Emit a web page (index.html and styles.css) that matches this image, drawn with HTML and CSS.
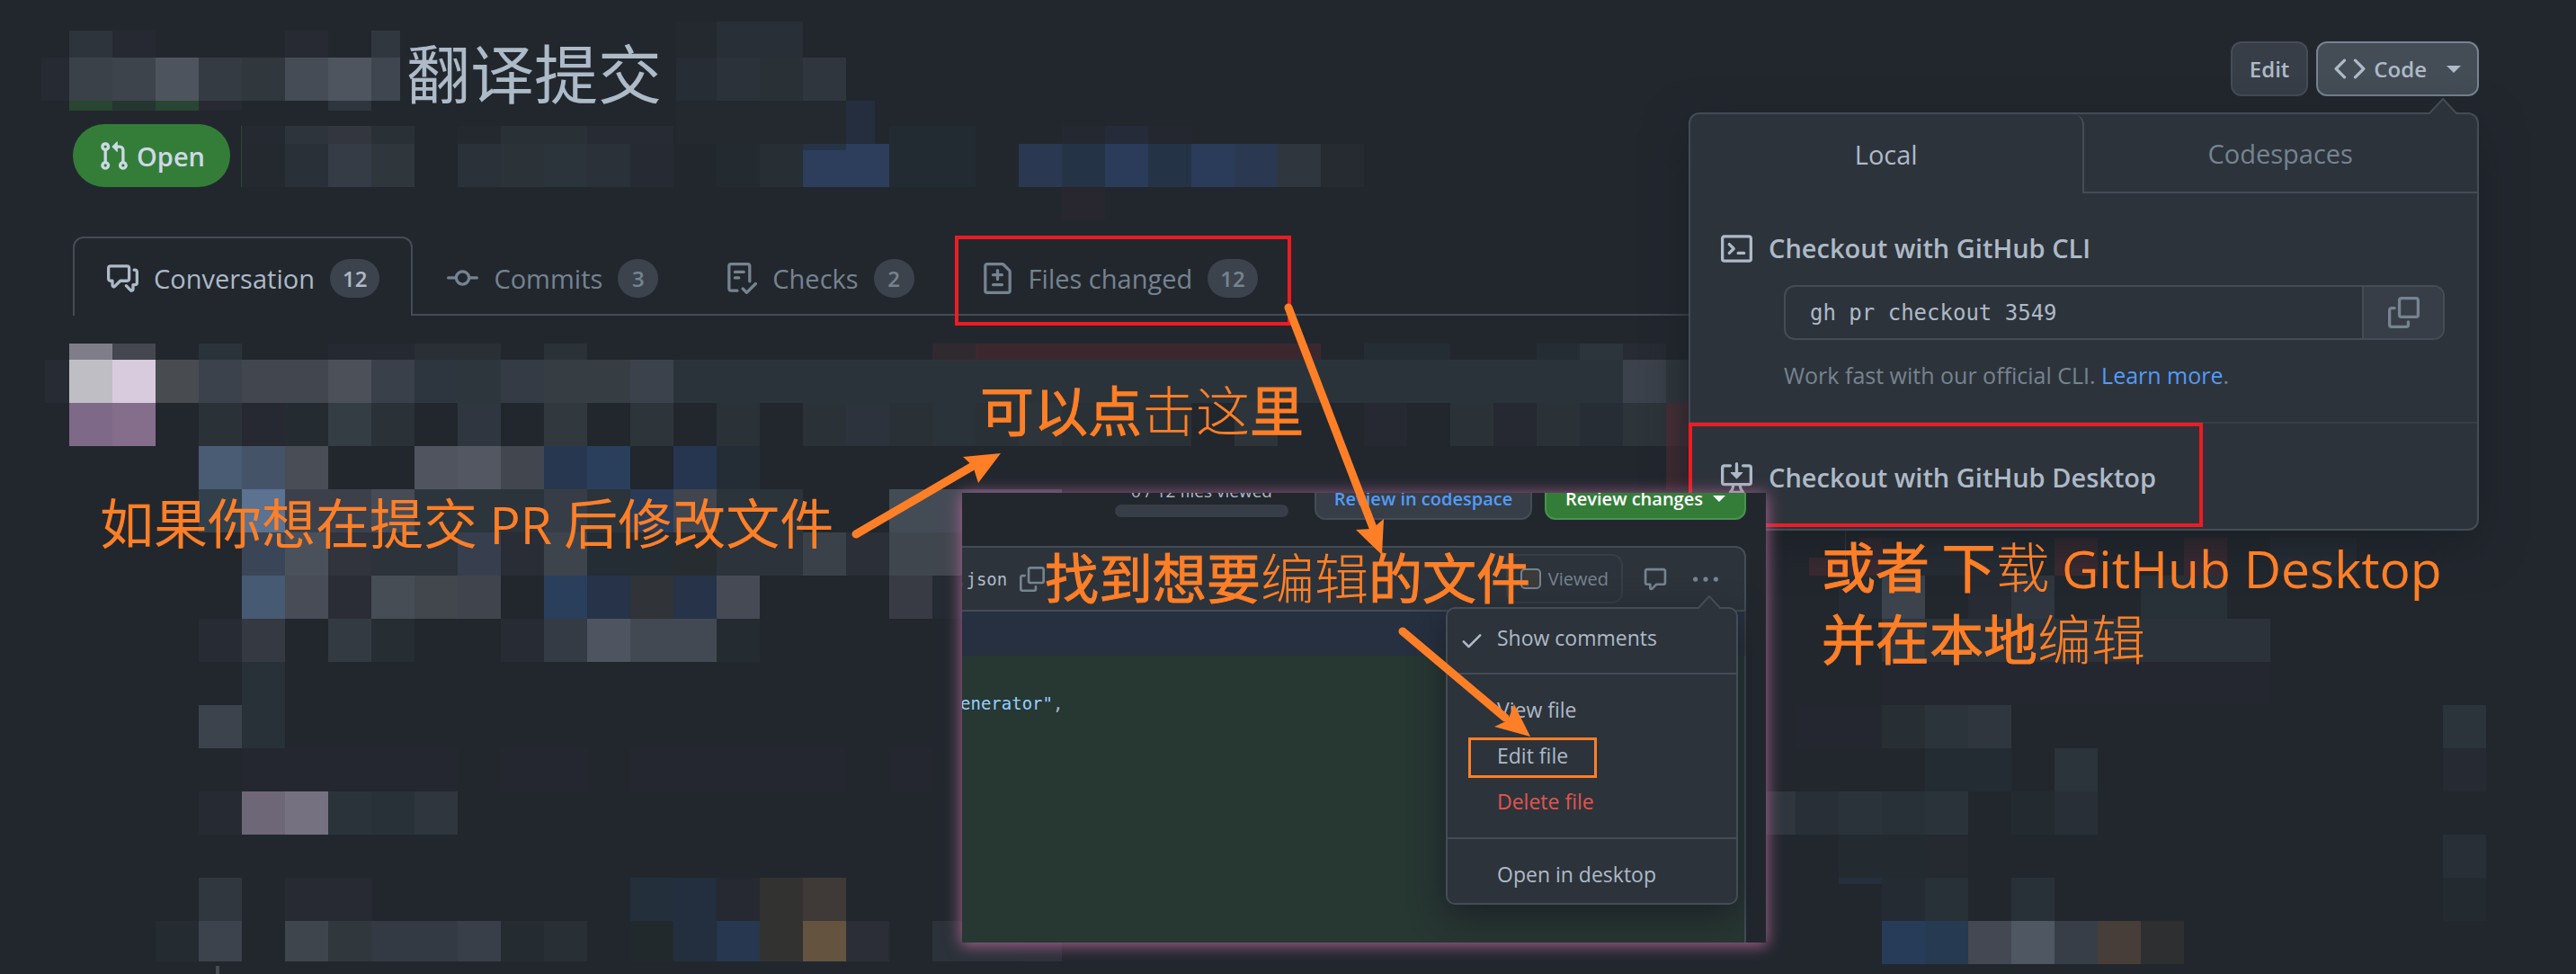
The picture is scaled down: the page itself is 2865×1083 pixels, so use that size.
FILE: index.html
```html
<!DOCTYPE html>
<html lang="zh-CN">
<head>
<meta charset="utf-8">
<meta name="viewport" content="width=device-width, initial-scale=1">
<title>翻译提交</title>
<link rel="stylesheet" href="styles.css">
</head>
<body>
<svg class="sprite" aria-hidden="true">
  <symbol id="i-pr" viewBox="0 0 16 16"><path d="M7.177 3.073L9.573.677A.25.25 0 0110 .854v4.792a.25.25 0 01-.427.177L7.177 3.427a.25.25 0 010-.354zM3.75 2.5a.75.75 0 100 1.5.75.75 0 000-1.5zm-2.25.75a2.25 2.25 0 113 2.122v5.256a2.251 2.251 0 11-1.5 0V5.372A2.25 2.25 0 011.5 3.25zM11 2.5h-1V4h1a1 1 0 011 1v5.628a2.251 2.251 0 101.5 0V5A2.5 2.5 0 0011 2.5zm1 10.25a.75.75 0 111.5 0 .75.75 0 01-1.5 0zM3.75 12a.75.75 0 100 1.5.75.75 0 000-1.5z"/></symbol>
  <symbol id="i-discussion" viewBox="0 0 16 16"><path d="M1.5 2.75a.25.25 0 01.25-.25h8.5a.25.25 0 01.25.25v5.5a.25.25 0 01-.25.25h-3.5a.75.75 0 00-.53.22L3.5 11.44V9.25a.75.75 0 00-.75-.75h-1a.25.25 0 01-.25-.25v-5.5zM1.75 1A1.75 1.75 0 000 2.75v5.5C0 9.216.784 10 1.75 10H2v1.543a1.457 1.457 0 002.487 1.03L7.061 10h3.189A1.75 1.75 0 0012 8.25v-5.5A1.75 1.75 0 0010.25 1h-8.5zM14.5 4.75a.25.25 0 00-.25-.25h-.5a.75.75 0 110-1.5h.5c.966 0 1.75.784 1.75 1.75v5.5A1.75 1.75 0 0114.25 12H14v1.543a1.457 1.457 0 01-2.487 1.03L9.22 12.28a.75.75 0 111.06-1.06l2.22 2.22v-2.19a.75.75 0 01.75-.75h1a.25.25 0 00.25-.25v-5.5z"/></symbol>
  <symbol id="i-commit" viewBox="0 0 16 16"><path fill-rule="evenodd" d="M11.93 8.5a4.002 4.002 0 01-7.86 0H.75a.75.75 0 010-1.5h3.32a4.002 4.002 0 017.86 0h3.32a.75.75 0 010 1.5h-3.32zm-1.43-.75a2.5 2.5 0 10-5 0 2.5 2.5 0 005 0z"/></symbol>
  <symbol id="i-checklist" viewBox="0 0 16 16"><path d="M2.5 1.75a.25.25 0 01.25-.25h8.5a.25.25 0 01.25.25v7.736a.75.75 0 101.5 0V1.75A1.75 1.75 0 0011.25 0h-8.5A1.75 1.75 0 001 1.75v11.5c0 .966.784 1.75 1.75 1.75h3.17a.75.75 0 000-1.5H2.75a.25.25 0 01-.25-.25V1.75zM4.75 4a.75.75 0 000 1.5h4.5a.75.75 0 000-1.5h-4.5zM4 7.75A.75.75 0 014.75 7h2a.75.75 0 010 1.5h-2A.75.75 0 014 7.75zm11.774 3.537a.75.75 0 00-1.048-1.074L10.7 14.145 9.281 12.72a.75.75 0 00-1.062 1.058l1.943 1.95a.75.75 0 001.055.008l4.557-4.45z"/></symbol>
  <symbol id="i-diff" viewBox="0 0 16 16"><path d="M2.75 1.5a.25.25 0 00-.25.25v12.5c0 .138.112.25.25.25h10.5a.25.25 0 00.25-.25V4.664a.25.25 0 00-.073-.177l-2.914-2.914a.25.25 0 00-.177-.073H2.75zM1 1.75C1 .784 1.784 0 2.75 0h7.586c.464 0 .909.184 1.237.513l2.914 2.914c.329.328.513.773.513 1.237v9.586A1.75 1.75 0 0113.25 16H2.75A1.75 1.75 0 011 14.25V1.75zm7 1.5a.75.75 0 01.75.75v1.5h1.5a.75.75 0 010 1.5h-1.5v1.5a.75.75 0 01-1.5 0V7h-1.5a.75.75 0 010-1.5h1.5V4A.75.75 0 018 3.25zm-3 8a.75.75 0 01.75-.75h4.5a.75.75 0 010 1.5h-4.5a.75.75 0 01-.75-.75z"/></symbol>
  <symbol id="i-code" viewBox="0 0 16 16"><path d="M4.72 3.22a.75.75 0 011.06 1.06L2.06 8l3.72 3.72a.75.75 0 11-1.06 1.06L.47 8.53a.75.75 0 010-1.06l4.25-4.25zm6.56 0a.75.75 0 10-1.06 1.06L13.94 8l-3.72 3.72a.75.75 0 101.06 1.06l4.25-4.25a.75.75 0 000-1.06l-4.25-4.25z"/></symbol>
  <symbol id="i-terminal" viewBox="0 0 16 16"><path d="M0 2.75C0 1.784.784 1 1.75 1h12.5c.966 0 1.75.784 1.75 1.75v10.5A1.75 1.75 0 0114.25 15H1.75A1.75 1.75 0 010 13.25V2.75zm1.75-.25a.25.25 0 00-.25.25v10.5c0 .138.112.25.25.25h12.5a.25.25 0 00.25-.25V2.75a.25.25 0 00-.25-.25H1.75zM7.25 8a.75.75 0 01-.22.53l-2.25 2.25a.75.75 0 11-1.06-1.06L5.44 8 3.72 6.28a.75.75 0 111.06-1.06l2.25 2.25c.141.14.22.331.22.53zm1.5 1.5a.75.75 0 000 1.5h3a.75.75 0 000-1.5h-3z"/></symbol>
  <symbol id="i-copy" viewBox="0 0 16 16"><path d="M0 6.75C0 5.784.784 5 1.75 5h1.5a.75.75 0 010 1.5h-1.5a.25.25 0 00-.25.25v7.5c0 .138.112.25.25.25h7.5a.25.25 0 00.25-.25v-1.5a.75.75 0 011.5 0v1.5A1.75 1.75 0 019.25 16h-7.5A1.75 1.75 0 010 14.25v-7.5z"/><path d="M5 1.75C5 .784 5.784 0 6.75 0h7.5C15.216 0 16 .784 16 1.75v7.5A1.75 1.75 0 0114.25 11h-7.5A1.75 1.75 0 015 9.25v-7.5zm1.75-.25a.25.25 0 00-.25.25v7.5c0 .138.112.25.25.25h7.5a.25.25 0 00.25-.25v-7.5a.25.25 0 00-.25-.25h-7.5z"/></symbol>
  <symbol id="i-desktop" viewBox="0 0 16 16"><path d="M4.927 5.427l2.896 2.896a.25.25 0 00.354 0l2.896-2.896A.25.25 0 0010.896 5H8.75V.75a.75.75 0 10-1.5 0V5H5.104a.25.25 0 00-.177.427z"/><path d="M1.573 2.573a.25.25 0 00-.073.177v7.5a.25.25 0 00.25.25h12.5a.25.25 0 00.25-.25v-7.5a.25.25 0 00-.25-.25h-3a.75.75 0 110-1.5h3A1.75 1.75 0 0116 2.75v7.5A1.75 1.75 0 0114.25 12h-3.727c.099 1.041.52 1.872 1.292 2.757A.75.75 0 0111.25 16h-6.5a.75.75 0 01-.565-1.243c.772-.885 1.192-1.716 1.292-2.757H1.75A1.75 1.75 0 010 10.25v-7.5A1.75 1.75 0 011.75 1h3a.75.75 0 010 1.5h-3a.25.25 0 00-.177.073zM6.982 12a5.72 5.72 0 01-.765 2.5h3.566a5.72 5.72 0 01-.765-2.5H6.982z"/></symbol>
  <symbol id="i-comment" viewBox="0 0 16 16"><path d="M2.75 2.5a.25.25 0 00-.25.25v7.5c0 .138.112.25.25.25h2a.75.75 0 01.75.75v2.19l2.72-2.72a.75.75 0 01.53-.22h4.5a.25.25 0 00.25-.25v-7.5a.25.25 0 00-.25-.25H2.75zM1 2.75C1 1.784 1.784 1 2.75 1h10.5c.966 0 1.75.784 1.75 1.75v7.5A1.75 1.75 0 0113.25 12H9.06l-2.573 2.573A1.457 1.457 0 014 13.543V12H2.75A1.75 1.75 0 011 10.25v-7.5z"/></symbol>
  <symbol id="i-kebab" viewBox="0 0 16 16"><circle cx="1.5" cy="8" r="1.5"/><circle cx="8" cy="8" r="1.5"/><circle cx="14.5" cy="8" r="1.5"/></symbol>
  <symbol id="i-check" viewBox="0 0 16 16"><path d="M13.78 4.22a.75.75 0 010 1.06l-7.25 7.25a.75.75 0 01-1.06 0L2.22 9.28a.75.75 0 011.06-1.06L6 10.94l6.72-6.72a.75.75 0 011.06 0z"/></symbol>
</svg>

<main class="page">
  <!-- Pixelated blocks over private text, drawn on a 48px grid -->
  <svg class="mosaic" aria-hidden="true" width="2865" height="1083">
    <!-- title and byline -->
    <g>
      <path fill="#2d343b" d="M77 34h48v30h-48z"/><path fill="#262931" d="M125 34h48v30h-48z"/><path fill="#272a32" d="M317 34h48v30h-48z"/><path fill="#30373f" d="M413 34h32v30h-32z"/>
      <path fill="#262a32" d="M46 64h31v48h-31z"/><path fill="#3a4148" d="M77 64h48v48h-48z"/><path fill="#3d444c" d="M125 64h48v48h-48z"/><path fill="#4e545e" d="M173 64h48v48h-48z"/><path fill="#353b43" d="M221 64h48v48h-48z"/><path fill="#30373d" d="M269 64h48v48h-48z"/><path fill="#464c56" d="M317 64h48v48h-48z"/><path fill="#4f555f" d="M365 64h48v48h-48z"/><path fill="#404650" d="M413 64h32v48h-32z"/>
      <path fill="#284631" d="M77 112h48v11h-48zM173 112h48v11h-48z"/><path fill="#25352f" d="M125 112h48v11h-48z"/><path fill="#272a32" d="M221 112h48v11h-48z"/><path fill="#2e353d" d="M365 112h48v11h-48z"/>
      <path fill="#24282f" d="M752 24h45v40h-45z"/><path fill="#282f36" d="M797 24h96v40h-96z"/><path fill="#262d34" d="M752 64h45v48h-45z"/><path fill="#2b3239" d="M797 64h48v48h-48z"/><path fill="#293137" d="M845 64h48v48h-48z"/><path fill="#2f363e" d="M893 64h48v48h-48z"/><path fill="#23292f" d="M752 112h189v48h-189z"/>
      <path fill="#252931" d="M269 140h48v20h-48z"/><path fill="#2d343c" d="M317 140h48v20h-48z"/><path fill="#33363e" d="M365 140h48v20h-48z"/><path fill="#293137" d="M413 140h48v20h-48z"/><path fill="#24282f" d="M509 140h48v20h-48z"/><path fill="#293036" d="M557 140h96v20h-96z"/><path fill="#272b33" d="M653 140h96v20h-96z"/>
      <path fill="#24282f" d="M269 160h48v48h-48z"/><path fill="#293037" d="M317 160h48v48h-48z"/><path fill="#363c46" d="M365 160h48v48h-48z"/><path fill="#2f373d" d="M413 160h48v48h-48z"/><path fill="#2a3138" d="M509 160h48v48h-48zM653 160h48v48h-48z"/><path fill="#2b3238" d="M557 160h48v48h-48z"/><path fill="#2c343b" d="M605 160h48v48h-48z"/><path fill="#262a32" d="M701 160h48v48h-48z"/>
      <path fill="#232b30" d="M797 160h48v48h-48z"/><path fill="#272e34" d="M845 160h48v48h-48z"/><path fill="#2c3e5c" d="M893 160h96v48h-96z"/><path fill="#252e3f" d="M941 112h32v48h-32z"/><path fill="#273446" d="M893 160h48v7h-48z"/><path fill="#232b32" d="M989 140h96v68h-96z"/>
      <path fill="#2a3851" d="M1133 160h48v48h-48zM1373 160h48v48h-48z"/><path fill="#253346" d="M1181 160h48v48h-48zM1277 160h48v48h-48z"/><path fill="#2b3c5a" d="M1229 160h48v48h-48zM1325 160h48v48h-48z"/><path fill="#2f363e" d="M1421 160h48v48h-48z"/><path fill="#262a31" d="M1469 160h48v48h-48z"/><path fill="#242931" d="M1181 140h48v20h-48z"/><path fill="#252b39" d="M1229 140h48v20h-48z"/><path fill="#24272f" d="M1277 140h48v20h-48z"/><path fill="#28262e" d="M1181 208h48v37h-48z"/>
      <path fill="#2a4931" d="M268 140h1v68h-1z"/>
    </g>
    <!-- top edge of the comment list -->
    <g>
      <path fill="#7f7d88" d="M77 382h48v18h-48z"/><path fill="#44474f" d="M125 382h48v18h-48z"/><path fill="#2b333a" d="M221 382h48v18h-48z"/><path fill="#252932" d="M365 382h96v18h-96z"/><path fill="#282f35" d="M461 382h96v18h-96z"/><path fill="#2a3137" d="M605 382h48v18h-48z"/><path fill="#302a30" d="M1037 382h48v18h-48z"/><path fill="#3b282f" d="M1085 382h384v18h-384z"/><path fill="#252d34" d="M1517 382h96v18h-96zM1709 382h48v18h-48z"/><path fill="#2c343c" d="M1757 382h48v18h-48z"/><path fill="#272b33" d="M1805 382h48v18h-48zM50 400h27v48h-27z"/>
    </g>
    <!-- comment list: every unit is one 48px cell, strokes run along row centres -->
    <g class="cells" transform="translate(77 424) scale(48)">
      <path stroke="#c0bec5" d="M0 0h1"/><path stroke="#d8cbde" d="M1 0h1"/><path stroke="#484b50" d="M2 0h1"/><path stroke="#3c424b" d="M3 0h1"/><path stroke="#41464f" d="M4 0h2"/><path stroke="#4b5059" d="M6 0h1"/><path stroke="#3a404a" d="M7 0h1"/><path stroke="#2d353f" d="M8 0h1"/><path stroke="#2e363d" d="M9 0h1"/><path stroke="#343b45" d="M10 0h1"/><path stroke="#363e44" d="M11 0h2"/><path stroke="#3b424b" d="M13 0h1M36 0h1"/><path stroke="#2b333a" d="M14 0h22"/><path stroke="#30383e" d="M37 0h1"/>
      <path stroke="#7f6988" d="M0 1h1"/><path stroke="#846e8b" d="M1 1h1"/><path stroke="#2a3238" d="M3 1h1M7 1h1M15 1h1M17 1h1M24 1h1M32 1h1M34 1h1"/><path stroke="#262931" d="M4 1h1M30 1h1M33 1h1"/><path stroke="#242c32" d="M5 1h1"/><path stroke="#353d44" d="M6 1h1"/><path stroke="#30363f" d="M9 1h1"/><path stroke="#31383e" d="M11 1h1"/><path stroke="#2d353a" d="M13 1h1M22 1h1M27 1h1M36 1h1"/><path stroke="#2c333d" d="M18 1h1"/><path stroke="#293136" d="M19 1h1M21 1h1M23 1h1M25 1h1"/><path stroke="#2b333a" d="M20 1h1"/><path stroke="#272d35" d="M35 1h1"/><path stroke="#492f37" d="M37 1h1"/>
      <path stroke="#4a5c73" d="M3 2h1"/><path stroke="#455369" d="M4 2h1"/><path stroke="#484d56" d="M5 2h1"/><path stroke="#4f545f" d="M8 2h1"/><path stroke="#525762" d="M9 2h1"/><path stroke="#42474f" d="M10 2h1"/><path stroke="#27374f" d="M11 2h1"/><path stroke="#2a3f5c" d="M12 2h1"/><path stroke="#263650" d="M14 2h1"/><path stroke="#242d36" d="M15 2h1"/><path stroke="#402a32" d="M37 2h1"/>
      <path stroke="#32404c" d="M3 3h1"/><path stroke="#5b7290" d="M4 3h1"/><path stroke="#3b404b" d="M5 3h2"/><path stroke="#464b56" d="M7 3h1"/><path stroke="#2d353c" d="M8 3h2"/><path stroke="#2b333b" d="M10 3h1M12 3h1M15 3h2"/><path stroke="#373d47" d="M11 3h1"/><path stroke="#293b57" d="M13 3h1"/><path stroke="#40454e" d="M14 3h1"/><path stroke="#434c55" d="M19 3h1"/><path stroke="#454b56" d="M20 3h3"/>
      <path stroke="#3a4657" d="M4 4h1"/><path stroke="#4b515a" d="M5 4h1"/><path stroke="#31343c" d="M6 4h1"/><path stroke="#2c333a" d="M7 4h2M15 4h2"/><path stroke="#373f4f" d="M9 4h1"/><path stroke="#292d35" d="M10 4h1"/><path stroke="#3e444c" d="M11 4h1"/><path stroke="#242c34" d="M12 4h2"/><path stroke="#272c31" d="M14 4h1"/><path stroke="#3a4149" d="M17 4h1"/><path stroke="#2b2f37" d="M18 4h1"/><path stroke="#40464e" d="M19 4h2"/>
      <path stroke="#475a73" d="M4 5h1"/><path stroke="#474c57" d="M5 5h1"/><path stroke="#2a2d36" d="M6 5h1"/><path stroke="#464d54" d="M7 5h1"/><path stroke="#42474e" d="M8 5h1"/><path stroke="#40454d" d="M9 5h1"/><path stroke="#2a3f5b" d="M11 5h1"/><path stroke="#263349" d="M12 5h1M14 5h1"/><path stroke="#303338" d="M13 5h1"/><path stroke="#454a55" d="M15 5h1"/><path stroke="#383b44" d="M19 5h1"/><path stroke="#242b32" d="M20 5h1M41 5h1"/><path stroke="#3c434d" d="M42 5h1"/><path stroke="#272b33" d="M44 5h1"/><path stroke="#30363f" d="M45 5h1"/><path stroke="#293138" d="M48 5h2"/>
      <path stroke="#272b33" d="M3 6h1M10 6h1"/><path stroke="#353941" d="M4 6h1"/><path stroke="#333a42" d="M6 6h1"/><path stroke="#262e34" d="M7 6h1"/><path stroke="#343b44" d="M11 6h1"/><path stroke="#4f5560" d="M12 6h1"/><path stroke="#434952" d="M13 6h2"/><path stroke="#242b31" d="M15 6h1"/><path stroke="#2f363e" d="M42 6h1"/><path stroke="#2b3239" d="M43 6h8"/>
      <path stroke="#293138" d="M4 7h1M4 8h1"/><path stroke="#24272f" d="M42 7h9M40 8h2M4 9h5M10 9h2M13 9h5M19 9h1"/>
      <path stroke="#3d434c" d="M3 8h1"/><path stroke="#272f35" d="M42 8h1"/><path stroke="#2b333b" d="M43 8h1M55 8h1M46 9h1"/><path stroke="#2f363e" d="M44 8h1"/><path stroke="#242c33" d="M43 9h2"/><path stroke="#262a32" d="M55 9h1M3 10h1"/>
      <path stroke="#6e6777" d="M4 10h1"/><path stroke="#767180" d="M5 10h1"/><path stroke="#2b333a" d="M6 10h1M41 10h1M43 10h1"/><path stroke="#293138" d="M7 10h1M42 10h1"/><path stroke="#2f363e" d="M8 10h1M39 10h1"/><path stroke="#282f36" d="M40 10h1M46 10h1M55 11h1"/><path stroke="#232b31" d="M45 10h1M41 11h2M55 12h1"/><path stroke="#252930" d="M43 11h1"/>
      <path stroke="#30373e" d="M3 12h1"/><path stroke="#272a33" d="M5 12h2"/><path stroke="#23303b" d="M13 12h1"/><path stroke="#232e3e" d="M14 12h1M14 13h1"/><path stroke="#262931" d="M15 12h1"/><path stroke="#323231" d="M16 12h1M16 13h1"/><path stroke="#3f3a37" d="M17 12h1"/><path stroke="#242b32" d="M42 12h1"/><path stroke="#293138" d="M43 12h1M45 12h1"/>
      <path stroke="#242c32" d="M2 13h1M10 13h1"/><path stroke="#3d434d" d="M3 13h1"/><path stroke="#3f454c" d="M5 13h1"/><path stroke="#30383e" d="M6 13h1"/><path stroke="#333a43" d="M7 13h2"/><path stroke="#393f49" d="M9 13h1"/><path stroke="#282f35" d="M11 13h1"/><path stroke="#22292d" d="M13 13h1"/><path stroke="#26374f" d="M15 13h1"/><path stroke="#64533f" d="M17 13h1"/><path stroke="#2b2e37" d="M18 13h1"/><path stroke="#2b3239" d="M20 13h2"/><path stroke="#2d303a" d="M22 13h1"/>
      <path stroke="#263c58" d="M42 13h1"/><path stroke="#263a52" d="M43 13h1"/><path stroke="#434853" d="M44 13h1"/><path stroke="#4e5762" d="M45 13h1"/><path stroke="#373e48" d="M46 13h1"/><path stroke="#473e39" d="M47 13h1"/><path stroke="#2e2f30" d="M48 13h1"/>
    </g>
    <!-- partial cells below the popover and the page foot -->
    <g>
      <path fill="#3d2a31" d="M2068 598h25v42h-25zM2012 620h56v20h-56zM2285 598h48v42h-48zM2429 598h48v42h-48z"/><path fill="#272d35" d="M2093 598h144v42h-144zM2525 598h96v42h-96z"/><path fill="#252e3d" d="M2045 976h48v7h-48z"/><path fill="#444c56" d="M2052 590h1v30h-1zM240 1074h4v9h-4z"/><path fill="#22272e" d="M173 1069h1100v3h-1100z"/>
    </g>
  </svg>

  <header class="pr-header">
    <div class="title-row">
      <h1 class="title">翻译提交</h1>
      <div class="actions">
        <button class="btn" type="button">Edit</button>
        <div class="code-menu">
          <button class="btn btn-code" type="button" aria-expanded="true"><svg class="icon" aria-hidden="true"><use href="#i-code"/></svg><span>Code</span><span class="caret"></span></button>
          <section class="popover" aria-label="Code">
            <svg class="popover-tip" viewBox="0 0 32 18" aria-hidden="true"><path class="tip" d="M0 18L16 1L32 18"/></svg>
            <div class="popover-tabs">
              <button class="ptab ptab-on" type="button">Local</button>
              <button class="ptab" type="button">Codespaces</button>
            </div>
            <div class="checkout">
              <h2 class="checkout-title"><svg class="icon" aria-hidden="true"><use href="#i-terminal"/></svg>Checkout with GitHub CLI</h2>
              <div class="cli">
                <input class="cli-input" type="text" readonly aria-label="CLI command" value="gh pr checkout 3549">
                <button class="cli-copy" type="button" aria-label="Copy"><svg class="icon" aria-hidden="true"><use href="#i-copy"/></svg></button>
              </div>
              <p class="help">Work fast with our official CLI. <a href="#cli">Learn more</a>.</p>
            </div>
            <div class="checkout checkout-desktop">
              <h2 class="checkout-title"><svg class="icon" aria-hidden="true"><use href="#i-desktop"/></svg>Checkout with GitHub Desktop</h2>
            </div>
          </section>
        </div>
      </div>
    </div>
    <span class="state"><svg class="icon" aria-hidden="true"><use href="#i-pr"/></svg>Open</span>
  </header>

  <nav class="tabs" aria-label="Pull request">
    <a class="tab tab-on" href="#conversation"><svg class="icon" aria-hidden="true"><use href="#i-discussion"/></svg><span>Conversation</span><span class="count">12</span></a>
    <a class="tab" href="#commits"><svg class="icon" aria-hidden="true"><use href="#i-commit"/></svg><span>Commits</span><span class="count">3</span></a>
    <a class="tab" href="#checks"><svg class="icon" aria-hidden="true"><use href="#i-checklist"/></svg><span>Checks</span><span class="count">2</span></a>
    <a class="tab" href="#files"><svg class="icon" aria-hidden="true"><use href="#i-diff"/></svg><span>Files changed</span><span class="count">12</span></a>
  </nav>

  <div class="mark mark-files"></div>
  <div class="mark mark-desktop"></div>

  <section class="inset" aria-label="Files changed">
    <div class="review-bar">
      <div class="viewed-count"><span>0 / 12 files viewed</span><span class="meter"></span></div>
      <button class="btn btn-small btn-link" type="button">Review in codespace</button>
      <button class="btn btn-small btn-green" type="button">Review changes<span class="caret"></span></button>
    </div>
    <div class="file">
      <div class="file-head">
        <span class="file-name">.json</span>
        <svg class="icon icon-s muted" aria-hidden="true"><use href="#i-copy"/></svg>
        <label class="viewed"><input class="tick" type="checkbox">Viewed</label>
        <svg class="icon icon-s muted" aria-hidden="true"><use href="#i-comment"/></svg>
        <svg class="icon icon-s muted" aria-hidden="true"><use href="#i-kebab"/></svg>
      </div>
      <div class="hunk"></div>
      <pre class="added"><code>enerator"<span class="comma">,</span></code></pre>
    </div>
    <div class="menu">
      <svg class="menu-tip" viewBox="0 0 26 15" aria-hidden="true"><path class="tip" d="M0 15L13 1L26 15"/></svg>
      <div class="menu-group menu-first"><button class="item" type="button"><svg class="icon icon-s" aria-hidden="true"><use href="#i-check"/></svg>Show comments</button></div>
      <div class="menu-group">
        <button class="item" type="button">View file</button>
        <button class="item" type="button">Edit file</button>
        <button class="item danger" type="button">Delete file</button>
      </div>
      <div class="menu-group menu-last"><button class="item" type="button">Open in desktop</button></div>
    </div>
  </section>

  <div class="mark mark-edit"></div>
  <p class="note note-intro">如果你想在提交 <span class="latin">PR</span> 后修改文件</p>
  <p class="note note-heavy note-click">可以点<span class="thin">击这</span>里</p>
  <p class="note note-heavy note-find">找到想要<span class="thin">编辑</span>的文件</p>
  <p class="note note-heavy note-desktop">或者 下<span class="thin">载</span> <span class="latin">GitHub Desktop</span><br>并在本地<span class="thin">编辑</span></p>
  <svg class="arrows" aria-hidden="true" width="2865" height="1083">
    <path class="shaft" d="M952 594L1084 517M1433 342L1529 592M1560 702L1674 798"/>
    <path class="head" d="M1113 504L1071 508L1082 518L1088 537zM1537 617L1508 589L1526 588L1539 577zM1702 819L1662 808L1677 801L1684 783z"/>
  </svg>
</main>
</body>
</html>
```
FILE: styles.css
```css
* { box-sizing: border-box; }

body {
  margin: 0;
  background: #22272e;
  color: #adbac7;
  font-family: "Open Sans", "Noto Sans CJK SC", sans-serif;
  font-size: 29px;
}

button, input { font: inherit; color: inherit; }
button { cursor: pointer; }
h1, h2, p, pre { margin: 0; }
a { color: #539bf5; text-decoration: none; }

.sprite { display: none; }
.icon { width: 35px; height: 35px; flex: none; fill: currentColor; }
.icon-s { width: 28px; height: 28px; }
.muted { color: #768390; }

.page {
  position: relative;
  min-height: 100vh;
  overflow: hidden;
  padding-top: 46px;
}

.mosaic, .arrows {
  position: absolute;
  left: 0;
  top: 0;
  pointer-events: none;
  shape-rendering: crispEdges;
}
.cells { stroke-width: 1; }

/* Header */
.pr-header { position: relative; z-index: 2; padding: 0 108px 0 81px; }
.title-row { display: flex; justify-content: space-between; align-items: flex-start; }
.title {
  padding-left: 371px;
  font-size: 71px;
  line-height: 72px;
  font-weight: 400;
}
.actions { display: flex; gap: 9px; }
.btn {
  display: flex;
  align-items: center;
  height: 61px;
  padding: 0 19px;
  border: 2px solid #444c56;
  border-radius: 12px;
  background: #373e47;
  font-size: 24px;
  font-weight: 600;
  white-space: nowrap;
}
.btn-code { gap: 9px; padding: 0 18px; border-color: #768390; background: #444c56; }
.caret {
  margin-left: 11px;
  border: 8px solid transparent;
  border-top-color: currentColor;
  border-bottom: 0;
}
.btn-code .caret { margin-left: 13px; }
.state {
  display: inline-flex;
  align-items: center;
  gap: 8px;
  height: 70px;
  margin-top: 20px;
  padding: 0 28px;
  border-radius: 35px;
  background: #347d39;
  color: #cdd9e5;
  font-size: 29px;
  font-weight: 600;
  vertical-align: top;
}

/* Code popover */
.code-menu { position: relative; }
.popover {
  position: absolute;
  top: 79px;
  right: 0;
  width: 879px;
  border: 2px solid #444c56;
  border-radius: 12px;
  background: #2d333b;
  box-shadow: 0 16px 48px #1c2128;
}
.popover-tip { position: absolute; right: 22px; top: -18px; width: 32px; height: 18px; }
.tip { fill: #2d333b; stroke: #444c56; stroke-width: 2; }
.popover-tabs { display: grid; grid-template-columns: 1fr 1fr; height: 88px; }
.ptab {
  border: 0;
  border-bottom: 2px solid #444c56;
  background: none;
  color: #768390;
}
.ptab-on {
  border-right: 2px solid #444c56;
  border-bottom: 0;
  border-radius: 0 12px 0 0;
  color: #adbac7;
}
.checkout { padding: 36px 36px 36px 34px; }
.checkout-desktop { padding-top: 35px; padding-bottom: 32px; border-top: 2px solid #373e47; }
.checkout-title {
  display: flex;
  align-items: center;
  gap: 18px;
  font-size: 29px;
  line-height: 50px;
  font-weight: 600;
}
.cli {
  display: flex;
  height: 61px;
  margin: 16px 0 0 70px;
  border: 2px solid #444c56;
  border-radius: 12px;
  overflow: hidden;
}
.cli-input {
  flex: 1;
  min-width: 0;
  padding: 0 27px;
  border: 0;
  background: none;
  font-family: "DejaVu Sans Mono", monospace;
  font-size: 24px;
}
.cli-copy {
  display: flex;
  align-items: center;
  justify-content: center;
  width: 90px;
  padding: 0;
  border: 0;
  border-left: 2px solid #444c56;
  background: #373e47;
  color: #768390;
}
.help { margin: 23px 0 0 70px; color: #768390; font-size: 25px; line-height: 32px; }

/* Tabs */
.tabs {
  position: relative;
  display: flex;
  height: 88px;
  margin: 55px 108px 0 81px;
  box-shadow: inset 0 -2px #444c56;
}
.tab {
  display: flex;
  align-items: center;
  gap: 17px;
  padding: 4px 37px 0 38px;
  color: #768390;
}
.tab-on {
  padding: 2px 35px 0 36px;
  border: 2px solid #444c56;
  border-bottom: 0;
  border-radius: 12px 12px 0 0;
  background: #22272e;
  color: #adbac7;
}
.count {
  min-width: 45px;
  padding: 0 14px;
  border-radius: 22px;
  background: #3d434d;
  font-size: 24px;
  line-height: 43px;
  font-weight: 600;
  text-align: center;
}

/* Screenshot inset */
.inset {
  position: absolute;
  z-index: 3;
  left: 1070px;
  top: 548px;
  width: 894px;
  height: 500px;
  overflow: hidden;
  background: #22272e;
  box-shadow: 0 2px 16px 1px #a8628f;
}
.review-bar {
  display: flex;
  justify-content: flex-end;
  height: 90px;
  margin: -31px 22px 0 0;
}
.viewed-count {
  display: flex;
  flex-direction: column;
  align-items: center;
  width: 193px;
  margin-right: 29px;
  padding-top: 14px;
  font-size: 19px;
  line-height: 30px;
  white-space: nowrap;
}
.meter { width: 193px; height: 14px; border-radius: 7px; background: #373e47; }
.btn-small { justify-content: center; padding: 14px 21px 0; font-size: 20px; }
.btn-small + .btn-small { margin-left: 14px; }
.btn-small .caret { border-width: 7px 7px 0; }
.btn-link { width: 242px; color: #539bf5; }
.btn-green { width: 224px; background: #347d39; border-color: #46954a; color: #fff; }
.file { margin-right: 22px; }
.file-head {
  display: flex;
  align-items: center;
  gap: 14px;
  height: 73px;
  padding-right: 29px;
  border: solid #444c56;
  border-width: 2px 2px 2px 0;
  border-radius: 0 12px 0 0;
  background: #2d333b;
}
.file-name { margin-left: -7px; font: 19px "DejaVu Sans Mono", monospace; }
.viewed {
  display: flex;
  align-items: center;
  gap: 8px;
  height: 55px;
  margin: 0 8px 0 auto;
  padding: 0 14px;
  border: 2px solid #373e47;
  border-radius: 12px;
  color: #768390;
  font-size: 20px;
}
.viewed + .icon { margin-right: 14px; }
.tick {
  appearance: none;
  width: 23px;
  height: 23px;
  margin: 0;
  border: 2px solid #768390;
  border-radius: 5px;
  background: #3b3b3b;
}
.hunk { height: 49px; background: #263040; border-right: 2px solid #373e47; }
.added {
  height: 319px;
  padding: 41px 0 0;
  border-right: 2px solid #444c56;
  background: #273732;
  color: #96d0ff;
  font: 19px/24px "DejaVu Sans Mono", monospace;
}
.added code { font: inherit; margin-left: -2px; }
.comma { color: #adbac7; }
.menu {
  position: absolute;
  right: 31px;
  top: 127px;
  width: 325px;
  border: 2px solid #444c56;
  border-radius: 10px;
  background: #2d333b;
  box-shadow: 0 12px 36px #1c2128;
}
.menu-tip { position: absolute; right: 17px; top: -15px; width: 26px; height: 15px; }
.menu-group { padding: 14px 0; }
.menu-group + .menu-group { border-top: 2px solid #444c56; }
.menu-first { padding: 7px 0 13px; }
.menu-last { padding: 14px 0 6px; }
.item {
  position: relative;
  display: block;
  width: 100%;
  height: 51px;
  padding: 0 0 0 55px;
  border: 0;
  background: none;
  font-size: 23px;
  line-height: 51px;
  text-align: left;
}
.item .icon { position: absolute; left: 13px; top: 14px; }
.danger { color: #e5534b; }

/* Annotations drawn over the page */
.mark { position: absolute; z-index: 2; border: 4px solid #ed1c24; }
.mark-files { left: 1062px; top: 262px; width: 374px; height: 100px; }
.mark-desktop { left: 1878px; top: 470px; width: 572px; height: 116px; }
.mark-edit { z-index: 4; left: 1633px; top: 820px; width: 143px; height: 45px; border: 3px solid #ff7f27; }
.note {
  position: absolute;
  z-index: 4;
  color: #ff7f27;
  font-family: "Noto Sans CJK SC", sans-serif;
  font-size: 60px;
  line-height: 80px;
  white-space: nowrap;
}
.latin { font-family: "Open Sans", sans-serif; font-size: 57px; line-height: 0; -webkit-text-stroke: 0; }
.note-intro { left: 111px; top: 539px; }
.note-heavy { -webkit-text-stroke: 1px #ff7f27; }
.note .thin { font-weight: 300; -webkit-text-stroke: 0; }
.note-click { left: 1090px; top: 414px; }
.note-find { left: 1162px; top: 600px; }
.note-desktop { left: 2026px; top: 588px; }
.arrows { z-index: 4; shape-rendering: auto; }
.shaft { fill: none; stroke: #ff7f27; stroke-width: 9; stroke-linecap: round; }
.head { fill: #ff7f27; }
```
